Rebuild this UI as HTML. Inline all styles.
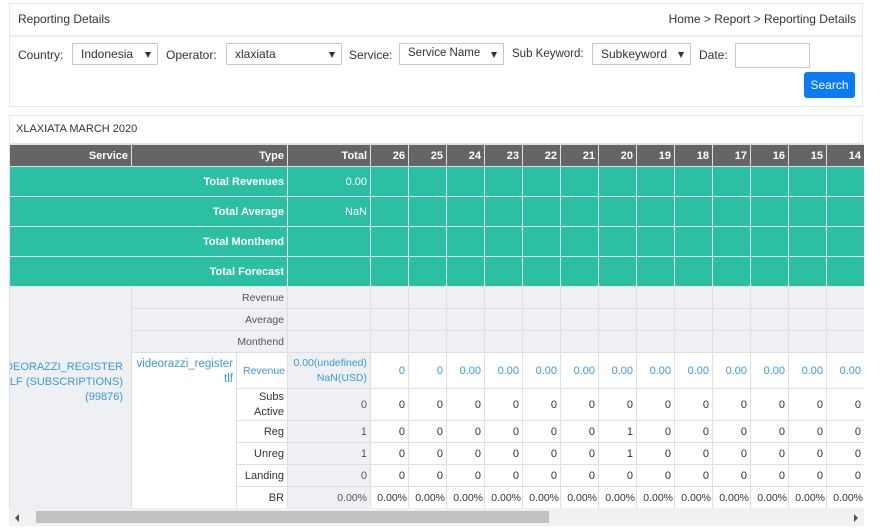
<!DOCTYPE html>
<html><head><meta charset="utf-8"><style>
*{box-sizing:border-box;margin:0;padding:0}
body{width:880px;height:530px;background:#fff;font-family:"Liberation Sans",sans-serif;font-size:12px;color:#333;position:relative;overflow:hidden}
.card{position:absolute;left:9px;width:854px;background:#fff;border:1px solid #e6e6e6}
.lbl{position:absolute;top:48px;font-size:12px;color:#333}
.sel{position:absolute;top:43px;height:22px;border:1px solid #c8c8c8;background:#fff;font-size:12px;padding:3px 0 0 8px;color:#333}
.sel:after{content:"";position:absolute;right:6px;top:8px;border-left:3.5px solid transparent;border-right:3.5px solid transparent;border-top:6px solid #333}
table{position:absolute;left:9px;top:144px;border-collapse:collapse;table-layout:fixed;width:855px}
td,th{border:1px solid #dcdfe4;text-align:right;padding:0 3px;font-size:11px;overflow:hidden;white-space:nowrap}
th{background:#666465;color:#fff;height:22px;border-color:#e0e0e0;font-weight:bold}
tr.t td{background:#2bbfa4;color:#fff;height:30px;border-color:#e0e8e6}
tr.t td:first-child{font-weight:bold}
.g{background:#eef0f4;color:#555}
.b{color:#3a9ad9}
.w{background:#fff}
.p{font-size:10.5px;padding:0 1px}
</style></head><body>
<div class="card" style="top:3px;height:32px;border-bottom:none"><div style="position:absolute;left:8px;top:8px;font-size:12px">Reporting Details</div><div style="position:absolute;right:6px;top:8px;font-size:12px">Home &gt; Report &gt; Reporting Details</div></div>
<div class="card" style="top:35px;height:72px;border-top:2px solid #eee"></div>
<div class="lbl" style="left:18px">Country:</div>
<div class="sel" style="left:72px;width:86px">Indonesia</div>
<div class="lbl" style="left:166px">Operator:</div>
<div class="sel" style="left:226px;width:116px">xlaxiata</div>
<div class="lbl" style="left:349px">Service:</div>
<div class="sel" style="left:399px;width:105px;font-size:11.5px">Service Name</div>
<div class="lbl" style="left:512px;font-size:11.5px">Sub Keyword:</div>
<div class="sel" style="left:592px;width:99px">Subkeyword</div>
<div class="lbl" style="left:699px">Date:</div>
<div style="position:absolute;left:735px;top:43px;width:75px;height:25px;border:1px solid #c8c8c8"></div>
<div style="position:absolute;left:804px;top:72px;width:51px;height:26px;background:#0a7bf5;border-radius:3px;color:#fff;font-size:12px;text-align:center;line-height:26px">Search</div>
<div class="card" style="top:115px;height:29px"><div style="position:absolute;left:6px;top:7px;font-size:11px;color:#333">XLAXIATA MARCH 2020</div></div>
<table>
<colgroup><col style="width:122px"><col style="width:105px"><col style="width:51px"><col style="width:83px"><col span="13" style="width:38px"></colgroup>
<tr><th>Service</th><th colspan="2">Type</th><th>Total</th><th>26</th><th>25</th><th>24</th><th>23</th><th>22</th><th>21</th><th>20</th><th>19</th><th>18</th><th>17</th><th>16</th><th>15</th><th>14</th></tr>
<tr class="t"><td colspan="3">Total Revenues</td><td>0.00</td><td></td><td></td><td></td><td></td><td></td><td></td><td></td><td></td><td></td><td></td><td></td><td></td><td></td></tr>
<tr class="t"><td colspan="3">Total Average</td><td>NaN</td><td></td><td></td><td></td><td></td><td></td><td></td><td></td><td></td><td></td><td></td><td></td><td></td><td></td></tr>
<tr class="t"><td colspan="3">Total Monthend</td><td></td><td></td><td></td><td></td><td></td><td></td><td></td><td></td><td></td><td></td><td></td><td></td><td></td><td></td></tr>
<tr class="t"><td colspan="3">Total Forecast</td><td></td><td></td><td></td><td></td><td></td><td></td><td></td><td></td><td></td><td></td><td></td><td></td><td></td><td></td></tr>
<tr style="height:22px"><td rowspan="10" class="g b" style="vertical-align:top;padding-top:73px;line-height:15px;font-size:11px;padding-right:10px"><div style="width:200px;margin-left:-90px;text-align:right">VIDEORAZZI_REGISTER<br>TLF (SUBSCRIPTIONS)<br>(99876)</div></td><td colspan="2" class="g" style="font-size:10.5px">Revenue</td><td class="g"></td><td class="g"></td><td class="g"></td><td class="g"></td><td class="g"></td><td class="g"></td><td class="g"></td><td class="g"></td><td class="g"></td><td class="g"></td><td class="g"></td><td class="g"></td><td class="g"></td><td class="g"></td></tr>
<tr style="height:22px"><td colspan="2" class="g" style="font-size:10.5px">Average</td><td class="g"></td><td class="g"></td><td class="g"></td><td class="g"></td><td class="g"></td><td class="g"></td><td class="g"></td><td class="g"></td><td class="g"></td><td class="g"></td><td class="g"></td><td class="g"></td><td class="g"></td><td class="g"></td></tr>
<tr style="height:22px"><td colspan="2" class="g" style="font-size:10.5px">Monthend</td><td class="g"></td><td class="g"></td><td class="g"></td><td class="g"></td><td class="g"></td><td class="g"></td><td class="g"></td><td class="g"></td><td class="g"></td><td class="g"></td><td class="g"></td><td class="g"></td><td class="g"></td><td class="g"></td></tr>
<tr style="height:36px"><td rowspan="7" class="b w" style="vertical-align:top;padding-top:4px;white-space:normal;line-height:15px;font-size:11.5px">videorazzi_register tlf</td><td class="b" style="font-size:10.5px;padding:0 2px">Revenue</td><td class="g b" style="line-height:15px;font-size:10.5px">0.00(undefined)<br>NaN(USD)</td><td class="b">0</td><td class="b">0</td><td class="b">0.00</td><td class="b">0.00</td><td class="b">0.00</td><td class="b">0.00</td><td class="b">0.00</td><td class="b">0.00</td><td class="b">0.00</td><td class="b">0.00</td><td class="b">0.00</td><td class="b">0.00</td><td class="b">0.00</td></tr>
<tr style="height:32px"><td style="white-space:normal;line-height:15px">Subs Active</td><td class="g">0</td><td>0</td><td>0</td><td>0</td><td>0</td><td>0</td><td>0</td><td>0</td><td>0</td><td>0</td><td>0</td><td>0</td><td>0</td><td>0</td></tr>
<tr style="height:22px"><td>Reg</td><td class="g">1</td><td>0</td><td>0</td><td>0</td><td>0</td><td>0</td><td>0</td><td>1</td><td>0</td><td>0</td><td>0</td><td>0</td><td>0</td><td>0</td></tr>
<tr style="height:22px"><td>Unreg</td><td class="g">1</td><td>0</td><td>0</td><td>0</td><td>0</td><td>0</td><td>0</td><td>1</td><td>0</td><td>0</td><td>0</td><td>0</td><td>0</td><td>0</td></tr>
<tr style="height:22px"><td>Landing</td><td class="g">0</td><td>0</td><td>0</td><td>0</td><td>0</td><td>0</td><td>0</td><td>0</td><td>0</td><td>0</td><td>0</td><td>0</td><td>0</td><td>0</td></tr>
<tr style="height:22px"><td>BR</td><td class="g" style="font-size:10.5px">0.00%</td><td class="p">0.00%</td><td class="p">0.00%</td><td class="p">0.00%</td><td class="p">0.00%</td><td class="p">0.00%</td><td class="p">0.00%</td><td class="p">0.00%</td><td class="p">0.00%</td><td class="p">0.00%</td><td class="p">0.00%</td><td class="p">0.00%</td><td class="p">0.00%</td><td class="p">0.00%</td></tr>
</table>
<div style="position:absolute;left:864px;top:140px;width:16px;height:390px;background:#fff"></div>
<div style="position:absolute;left:9px;top:508px;width:855px;height:18px;background:#f1f1f1"></div>
<div style="position:absolute;left:36px;top:511px;width:513px;height:12px;background:#c1c1c1"></div>
<div style="position:absolute;left:15px;top:514px;border-top:4px solid transparent;border-bottom:4px solid transparent;border-right:4px solid #505050"></div>
<div style="position:absolute;left:854px;top:514px;border-top:4px solid transparent;border-bottom:4px solid transparent;border-left:4px solid #505050"></div>
</body></html>
